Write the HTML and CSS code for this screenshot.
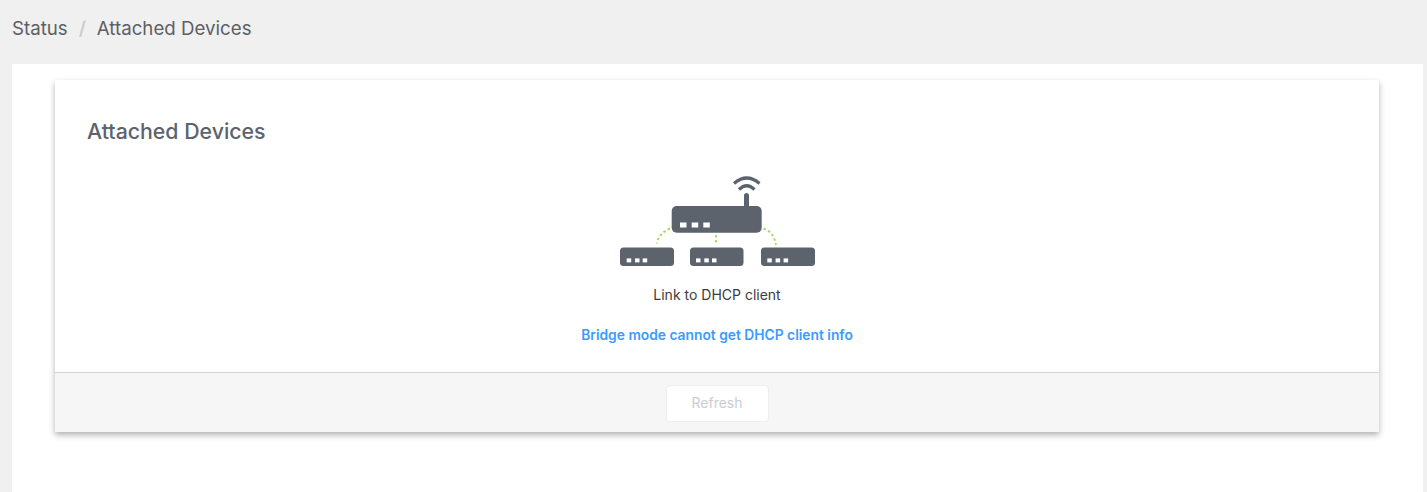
FILE: index.html
```html
<!DOCTYPE html>
<html lang="en">
<head>
    <meta charset="UTF-8">
    <meta name="viewport" content="width=device-width, initial-scale=1.0">
    <title>Attached Devices</title>
    <link rel="stylesheet" href="styles.css">
</head>
<body>
    <nav class="breadcrumb">
        <span>Status</span>
        <span class="separator">/</span>
        <span>Attached Devices</span>
    </nav>

    <main class="panel">
        <section class="card">
            <div class="card-body">
                <h1>Attached Devices</h1>
                <div class="empty-state">
                    <svg class="topology" width="200" height="94" viewBox="0 0 200 94" aria-hidden="true">
                        <!-- wifi -->
                        <path d="M117 8.5 Q129.7 -2.5 142.5 8.5" fill="none" stroke="#5d636d" stroke-width="3.2"/>
                        <path d="M122 14.5 Q129.7 7 137.5 14.5" fill="none" stroke="#5d636d" stroke-width="3.2"/>
                        <rect x="127" y="18" width="5" height="16" rx="2.5" fill="#5d636d"/>
                        <!-- links -->
                        <g fill="none" stroke="#a9dc62" stroke-width="2" stroke-dasharray="2.5 2.5">
                            <path d="M53 53.5 Q42 58 39.7 68.5"/>
                            <path d="M99 60 V70"/>
                            <path d="M146.5 53.5 Q157 57 159 70"/>
                        </g>
                        <!-- router -->
                        <rect x="54.7" y="31" width="90" height="26.7" rx="5" fill="#5d636d"/>
                        <g fill="#fff">
                            <rect x="63" y="47.5" width="6.5" height="5"/>
                            <rect x="74.7" y="47.5" width="6.5" height="5"/>
                            <rect x="86.3" y="47.5" width="6.5" height="5"/>
                        </g>
                        <!-- clients -->
                        <rect x="3" y="72.5" width="54" height="18.5" rx="3.5" fill="#5d636d"/>
                        <rect x="73" y="72.5" width="53.5" height="18.5" rx="3.5" fill="#5d636d"/>
                        <rect x="144" y="72.5" width="54" height="18.5" rx="3.5" fill="#5d636d"/>
                        <g fill="#fff">
                            <rect x="9.7" y="83.4" width="4.5" height="4"/>
                            <rect x="18" y="83.4" width="4.5" height="4"/>
                            <rect x="25.7" y="83.4" width="4.5" height="4"/>
                            <rect x="79" y="83.4" width="4.5" height="4"/>
                            <rect x="87.3" y="83.4" width="4.5" height="4"/>
                            <rect x="95" y="83.4" width="4.5" height="4"/>
                            <rect x="150.3" y="83.4" width="4.5" height="4"/>
                            <rect x="158.6" y="83.4" width="4.5" height="4"/>
                            <rect x="166.6" y="83.4" width="4.5" height="4"/>
                        </g>
                    </svg>
                    <p class="caption">Link to DHCP client</p>
                    <p class="notice">Bridge mode cannot get DHCP client info</p>
                </div>
            </div>
            <div class="card-footer">
                <button type="button" disabled>Refresh</button>
            </div>
        </section>
    </main>
</body>
</html>
```

FILE: styles.css
```css
html, body {
    height: 100%;
}

body {
    font-family: Inter, "Liberation Sans", sans-serif;
    background-color: #f0f0f0;
    margin: 0;
    display: flex;
    flex-direction: column;
    overflow: hidden;
}

.breadcrumb {
    height: 64px;
    flex: none;
    display: flex;
    align-items: center;
    gap: 11px;
    padding: 0 12px 8px;
    box-sizing: border-box;
    font-size: 18.7px;
    color: #5d5f64;
}

.separator {
    color: #c9ccd3;
    font-weight: 600;
}

.panel {
    flex: 1;
    margin: 0 4px 0 12px;
    padding: 16px 44px 0 43px;
    background-color: #fff;
}

.card {
    background-color: #fff;
    box-shadow: 0 3px 6px rgba(0, 0, 0, 0.3);
}

.card-body {
    height: 292px;
    padding: 0 32px;
    box-sizing: border-box;
    overflow: hidden;
}

h1 {
    margin: 0;
    padding-top: 37px;
    font-size: 21.3px;
    line-height: 28px;
    font-weight: 500;
    color: #5d636d;
}

.empty-state {
    display: flex;
    flex-direction: column;
    align-items: center;
    padding-top: 30px;
}

.topology {
    display: block;
}

.caption {
    margin: 16px 0 0;
    font-size: 14px;
    line-height: 20px;
    color: #3c3c3c;
}

.notice {
    margin: 20px 0 0;
    font-size: 13.8px;
    line-height: 20px;
    font-weight: 600;
    color: #3a9bff;
}

.card-footer {
    height: 60px;
    box-sizing: border-box;
    display: flex;
    justify-content: center;
    padding-top: 12px;
    background-color: #f6f6f6;
    border-top: 1px solid #d4d4d4;
}

button {
    width: 103px;
    height: 37px;
    padding: 0 0 2px;
    background-color: #fff;
    color: #c9ccd3;
    border: 1px solid #eeeeee;
    border-radius: 4px;
    font-family: inherit;
    font-size: 14px;
}
```
